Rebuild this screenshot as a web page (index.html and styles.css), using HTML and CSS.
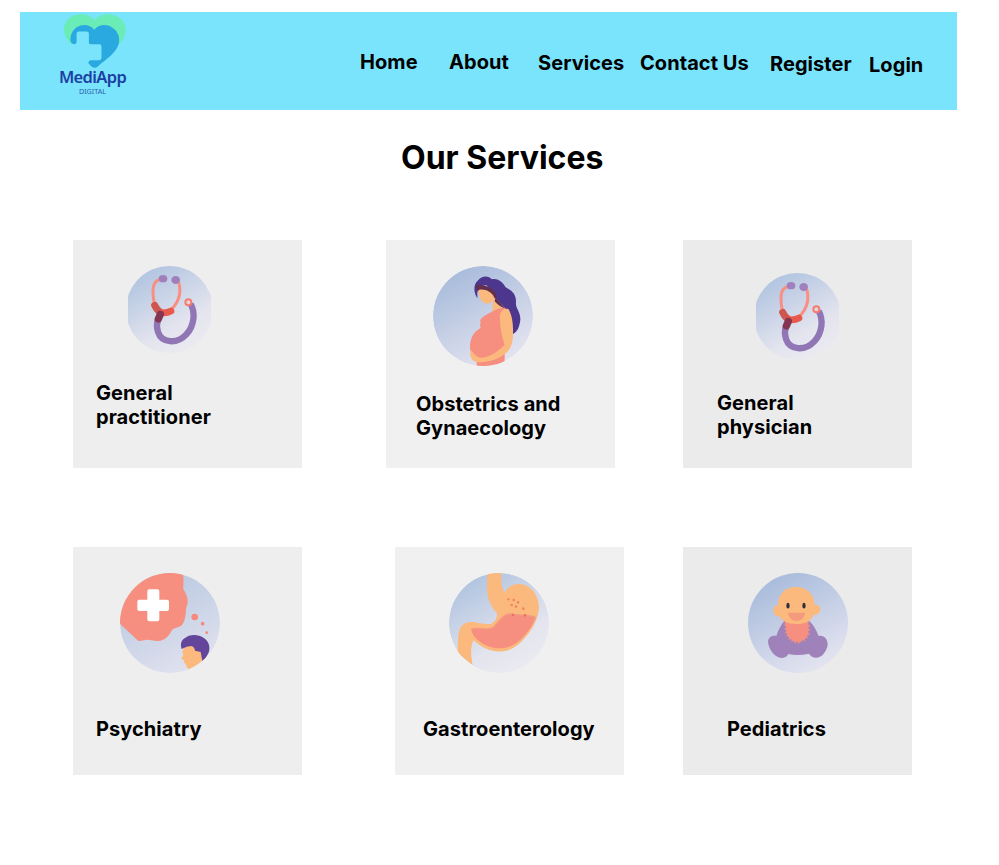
FILE: index.html
```html
<!DOCTYPE html>
<html lang="en">
<head>
<meta charset="utf-8">
<title>MediApp - Our Services</title>
<link rel="stylesheet" href="styles.css">
</head>
<body>
<svg width="0" height="0" class="defs">
  <defs>
    <linearGradient id="disc" x1="0.2" y1="0.05" x2="0.7" y2="1">
      <stop offset="0" stop-color="#a7bbdb"/>
      <stop offset="1" stop-color="#e6e5f1"/>
    </linearGradient>
    <linearGradient id="disc-light" x1="0.1" y1="0.05" x2="0.65" y2="1">
      <stop offset="0" stop-color="#acc1df"/>
      <stop offset="0.72" stop-color="#e3e4ee"/>
      <stop offset="1" stop-color="#ebeaf1"/>
    </linearGradient>
    <linearGradient id="disc-mid" x1="0.2" y1="0" x2="0.7" y2="1">
      <stop offset="0" stop-color="#b5c6e0"/>
      <stop offset="1" stop-color="#e1e2ee"/>
    </linearGradient>
    <clipPath id="round"><circle cx="174" cy="174" r="150"/></clipPath>
    <filter id="soft" x="-10%" y="-10%" width="120%" height="120%"><feGaussianBlur stdDeviation="2"/></filter>
    <symbol id="stethoscope" viewBox="24 24 249 261">
      <circle cx="148.500" cy="154.500" r="130.500" fill="url(#disc-light)"/>
      <g fill="none" stroke-linecap="round" filter="url(#soft)">
        <path d="M125 64C99 66 97 90 100 118C102 145 112 159 132 161C161 162 188 118 177 75" stroke="#fa8e82" stroke-width="9"/>
        <path d="M212 138C226 162 224 202 199 229C170 260 125 255 114 222C109 207 110 196 114 184" stroke="#9076b5" stroke-width="19" stroke-linecap="butt"/>
        <path d="M104 142Q111 157 121 163" stroke="#cf5550" stroke-width="21"/>
        <path d="M124 164Q140 166 153 159" stroke="#e8594c" stroke-width="20"/>
        <path d="M121 169L115 183" stroke="#843651" stroke-width="22"/>
        <circle cx="205" cy="133" r="9" stroke="#f67c6d" stroke-width="6" fill="#e3d5e0"/>
      </g>
      <g fill="#a07fbd" filter="url(#soft)">
        <ellipse cx="129" cy="62" rx="13" ry="11"/>
        <ellipse cx="167" cy="66" rx="13" ry="12"/>
      </g>
    </symbol>
  </defs>
</svg>

<header class="topbar">
  <a class="brand">
    <svg class="brand-mark" viewBox="42 18 187 162">
      <path d="M135 36C151 15 186 12 209 29C234 48 232 77 217 98C208 112 196 119 184 127L134 90L82 85L66 111C45 92 35 66 47 43C63 12 113 10 135 36Z" fill="#69ecb6"/>
      <path d="M66 111L70 60H130L165 100V160H112V110Z" fill="#7ae4fd"/>
      <path d="M134 65C145 49 170 47 187 58C210 72 213 99 203 118C190 143 159 161 144 176Q134 184 125 176L116 167Q114 160 122 157L149 157Q155 155 155 150V115Q155 109 149 109H122Q117 109 117 103V75Q116 70 111 70H85Q80 71 80 77V102Q79 108 74 109C58 109 59 88 66 74C78 48 115 42 134 65Z" fill="#29a9df"/>
    </svg>
    <span class="brand-name">MediApp</span>
    <span class="brand-tag">DIGITAL</span>
  </a>
  <nav class="menu">
    <a>Home</a>
    <a>About</a>
    <a class="drop-1">Services</a>
    <a class="drop-1">Contact Us</a>
    <a class="drop-2">Register</a>
    <a class="drop-3">Login</a>
  </nav>
</header>

<main>
  <h1>Our Services</h1>

  <section class="row">
    <article class="card practitioner">
      <svg class="scope"><use href="#stethoscope"/></svg>
      <h2>General<br>practitioner</h2>
    </article>

    <article class="card obstetrics">
      <svg class="icon" viewBox="24 24 300 300">
        <g clip-path="url(#round)">
          <circle cx="174" cy="174" r="150" fill="url(#disc)"/>
          <path d="M157 121C145 103 145 79 158 68C172 51 192 54 200 64C222 60 235 76 241 87C260 98 274 108 273 132C270 151 287 160 286 185C284 204 278 221 264 228L244 155L212 120L185 82L157 85Z" fill="#4c368e"/>
          <path d="M206 105L212 132L239 155L228 187L199 170Q205 153 203 137Z" fill="#fcb97d"/>
          <path d="M159 94C168 91 194 91 207 109C207 129 197 137 186 137C171 136 163 123 159 94Z" fill="#fcb97d"/>
          <path d="M152 82Q165 78 178 83Q199 86 212 104L215 122L241 152Q224 147 209 130L211 119Q207 123 206 115C197 100 178 91 161 96L158 103Z" fill="#632f4e"/>
          <path d="M201 161Q222 148 239 149L252 164L255 250L239 281V327H155V311Q138 297 135 270C134 242 146 220 168 210C161 202 170 194 165 188C170 176 185 169 201 161Z" fill="#f68f80"/>
          <path d="M225 173C226 158 239 149 250 153C262 171 265 200 264 226C265 252 258 275 238 289C214 307 188 313 159 313C138 311 133 293 137 276C148 287 155 300 171 299C193 297 218 282 239 260C229 233 224 202 225 173Z" fill="#fcb97d"/>
        </g>
      </svg>
      <h2>Obstetrics and<br>Gynaecology</h2>
    </article>

    <article class="card physician">
      <svg class="scope"><use href="#stethoscope"/></svg>
      <h2>General<br>physician</h2>
    </article>
  </section>

  <section class="row row-second">
    <article class="card psychiatry">
      <svg class="icon" viewBox="24 24 300 300">
        <g clip-path="url(#round)">
          <circle cx="174" cy="174" r="150" fill="url(#disc-mid)"/>
          <path d="M20 20H210C218 40 213 56 214 73C223 87 228 99 227 115C219 133 224 151 216 169C209 190 193 186 182 193C174 205 167 222 146 227C128 231 113 222 99 225Q88 228 79 228L22 174Z" fill="#f68f80"/>
          <path d="M112 73H136Q142 73 142 79V104H165Q171 104 171 110V132Q171 138 165 138H142V163Q142 169 136 169H112Q106 169 106 163V138H82Q76 138 76 132V110Q76 104 82 104H106V79Q106 73 112 73Z" fill="#fff"/>
          <g fill="#f5897d"><circle cx="248" cy="156" r="10"/><circle cx="272" cy="176" r="5.500"/><circle cx="284" cy="203" r="4"/></g>
          <path d="M216 248L240 239L270 261L272 286Q252 305 230 313Q223 307 221 297L215 292L217 286L207 282L214 270L211 261Z" fill="#fcb97d"/>
          <path d="M209 252C204 237 208 226 218 220C230 208 258 206 274 218C294 228 297 255 286 270Q282 281 271 288L266 261L249 257Q247 245 238 243Q225 243 209 252Z" fill="#63459b"/>
        </g>
      </svg>
      <h2>Psychiatry</h2>
    </article>

    <article class="card gastro">
      <svg class="icon" viewBox="24 24 300 300">
        <g clip-path="url(#round)">
          <circle cx="174" cy="174" r="150" fill="url(#disc-light)"/>
          <path d="M139 20H182C179 44 181 66 190 84C198 66 216 56 235 57C270 58 294 91 294 129C291 165 270 201 243 228C219 254 190 262 165 259C137 256 117 243 98 226C88 242 89 270 95 301L50 264C51 238 49 210 57 191C66 172 82 170 99 171C120 176 138 178 151 176C162 170 169 161 168 145C153 130 139 103 138 75Z" fill="#fcb97d"/>
          <path d="M91 195C91 190 98 190 105 190C130 192 148 194 160 185C174 169 183 153 198 148Q208 146 218 148L270 153C280 153 284 156 282 163C271 190 248 219 226 234C206 249 180 252 157 248C128 243 95 219 91 195Z" fill="#f68f80"/>
          <path d="M91 195C91 190 98 190 105 190C130 192 148 194 160 185C174 169 183 153 198 148Q208 146 218 148L270 153C280 153 284 156 282 163" fill="none" stroke="#f49b81" stroke-width="4"/>
          <g fill="#f1875f"><circle cx="202" cy="103" r="3.500"/><circle cx="218" cy="105" r="4"/><circle cx="231" cy="112" r="4"/><circle cx="212" cy="120" r="4"/><circle cx="225" cy="125" r="4"/><circle cx="247" cy="131" r="4"/></g>
          <g fill="#ea705f"><circle cx="216" cy="150" r="4"/><circle cx="252" cy="151" r="4"/></g>
        </g>
      </svg>
      <h2>Gastroenterology</h2>
    </article>

    <article class="card pediatrics">
      <svg class="icon" viewBox="24 24 300 300">
        <circle cx="174" cy="174" r="150" fill="url(#disc)"/>
        <path d="M133 168H208Q225 184 236 213C250 209 264 221 263 240C259 260 246 279 227 278C216 277 212 273 207 266Q174 273 145 267Q139 279 123 279C102 274 86 253 84 230C85 217 96 211 109 213Q118 185 133 168Z" fill="#a082ba"/>
        <path d="M135 168H208L204 178L211 182L204 188L211 195L203 200L210 208L201 211L204 220L195 219L195 229L187 224L184 233L180 229L177 238L171 229L165 236L162 227L155 231L154 222L146 224L147 215L139 214L142 206L134 203L140 197L133 191L139 186L134 181Z" fill="#f68f80"/>
        <path d="M114 121C113 87 136 66 168 66C201 66 223 88 224 121C233 117 241 123 241 132C240 144 232 151 222 149C212 169 195 177 169 177C145 177 126 170 118 154C107 156 100 148 100 136C101 125 107 120 114 121Z" fill="#fcb97d"/>
        <path d="M143 143H196Q191 168 169 168Q149 168 143 143Z" fill="#f59b7d"/>
        <g fill="#30303a"><ellipse cx="144" cy="122" rx="5" ry="8.500"/><ellipse cx="192" cy="122" rx="5" ry="8.500"/></g>
      </svg>
      <h2>Pediatrics</h2>
    </article>
  </section>
</main>
</body>
</html>
```
FILE: styles.css
```css
* { box-sizing: border-box; }

body {
  margin: 0;
  padding: 12px 42px 0 20px;
  background: #fff;
  color: #000;
  font-family: Inter, "Liberation Sans", sans-serif;
}

.defs { display: block; height: 0; }
svg { display: block; }

.topbar {
  display: flex;
  height: 98px;
  background: #7ae4fd;
}

.brand {
  display: flex;
  flex-direction: column;
  align-items: center;
  width: 145px;
  padding-top: 2px;
}

.brand-mark { width: 62px; height: 54px; margin-left: 5px; }

.brand-name {
  margin-top: -1px;
  font: 600 16.5px/20px "Noto Sans", sans-serif;
  color: #1c3fa2;
  letter-spacing: -0.65px;
}

.brand-tag {
  font: 400 7.200px/8px "Noto Sans", sans-serif;
  color: #2d5ca9;
  letter-spacing: 0;
}

.menu {
  display: grid;
  grid-template-columns: 89px 89px 102px 130px 99px auto;
  margin-left: 195px;
  padding-top: 38px;
  font-size: 20px;
  font-weight: 700;
  line-height: 24px;
  letter-spacing: 0.06px;
  white-space: nowrap;
}

.drop-1 { padding-top: 1px; }
.drop-2 { padding-top: 2px; }
.drop-3 { padding-top: 3px; }

h1 {
  margin: 28px 0 62px 381px;
  font-size: 32px;
  font-weight: 700;
  line-height: 40px;
}

.row {
  display: flex;
  padding-left: 53px;
}

.row-second { margin-top: 79px; }

.card {
  flex: none;
  width: 229px;
  height: 228px;
  background: #eee;
}

.card h2 {
  margin: 0;
  font-size: 20px;
  font-weight: 700;
  line-height: 24px;
  letter-spacing: 0.06px;
  white-space: nowrap;
}

.scope { width: 83px; height: 87px; }
.icon { width: 100px; height: 100px; }

.practitioner { padding: 26px 0 0 23px; }
.practitioner .scope { margin: 0 0 28px 32px; }

.obstetrics { margin-left: 84px; padding: 26px 0 0 30px; background: #f0f0f0; }
.obstetrics .icon { margin: 0 0 26px 17px; }

.physician { margin-left: 68px; padding: 33px 0 0 34px; background: #ebebeb; }
.physician .scope { margin: 0 0 31px 39px; }

.psychiatry { padding: 26px 0 0 23px; }
.psychiatry .icon { margin: 0 0 44px 24px; }

.gastro { margin-left: 93px; padding: 26px 0 0 28px; background: #f0f0f0; }
.gastro .icon { margin: 0 0 44px 26px; }

.pediatrics { margin-left: 59px; padding: 26px 0 0 44px; background: #ebebeb; }
.pediatrics .icon { margin: 0 0 44px 21px; }
```
